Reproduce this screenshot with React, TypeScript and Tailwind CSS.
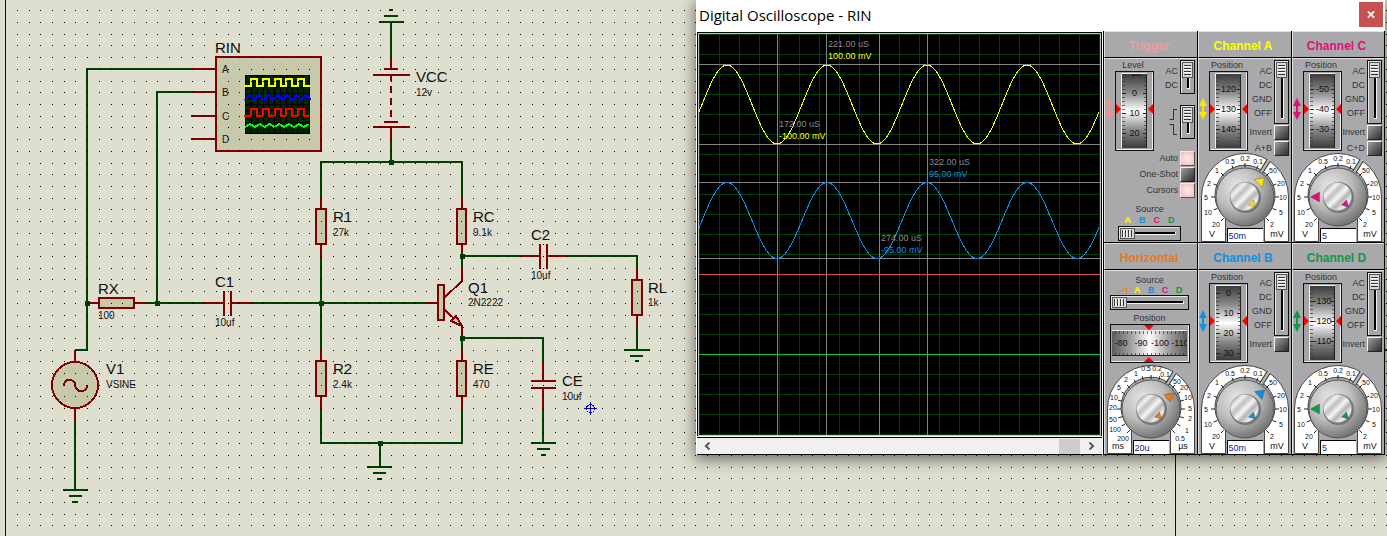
import React from "react";

const SANS = "font-['Liberation_Sans',Arial,sans-serif]";

const WIRE = "#004000";
const PIN = "#800000";
const BODY = "#c8c8aa";

/* ---------- Schematic ---------- */

function gridDots(width: number, height: number) {
  let d = "";
  for (let j = 0; 10.9 + 11.7 * j < height; j++) {
    const y = Math.floor(10.9 + 11.7 * j);
    for (let i = 0; 17.4 + 11.7 * i < width; i++) {
      d += `M${Math.floor(17.4 + 11.7 * i)} ${y}h1v1h-1z`;
    }
  }
  return d;
}

const DOTS = gridDots(2600, 1500);

const WIRES = [
  "M192 69H87V350H75",
  "M192 92H157V303",
  "M146 303H204M252 303H426",
  "M391 22V57M391 139V162",
  "M321 198V162H462V198",
  "M321 257V350M321 409V443H462V409",
  "M462 256V268M462 256H519M567 256H637V267",
  "M637 327V350M462 338V350M462 338H543V361",
  "M543 409V443M380 443V467M75 421V490",
  "M389 10H393M384 16H398M379 22H404",
  "M367 467H392M373 473H386M377 479H382",
  "M624 350H650M630 356H643M635 361H639",
  "M531 443H556M537 449H550M541 455H546",
  "M63 490H88M69 496H82M72 502H78",
].join("");

const PINS = [
  "M192 69H216M192 92H216M191 116H216M191 139H216",
  "M87 303H99M134 303H146M204 303H224M231 303H252",
  "M224 291V316M231 291V316",
  "M391 57V69M384 69H398M373 75H410M391 75V81M391 86V93M391 98V105M391 110V117M384 122H398M373 127H410M391 127V139",
  "M321 198V209M321 244V257M462 198V209M462 244V256",
  "M321 350V361M321 396V409M462 350V361M462 396V409",
  "M519 256H540M547 256H567M540 244V269M547 244V269",
  "M637 267V280M637 315V327",
  "M543 361V381M543 388V409M531 381H556M531 388H556",
  "M426 303H438M462 268V281L445 297M445 310L462 326V338",
  "M75 350V362M75 408V421",
].join("");

const NODES = [
  [87, 303],
  [157, 303],
  [321, 303],
  [391, 162],
  [462, 256],
  [462, 338],
  [380, 443],
];

const LABELS: [number, number, string, number, string][] = [
  [215, 53, "RIN", 0, ""],
  [416, 82, "VCC", 96, "12v"],
  [333, 222, "R1", 236, "27k"],
  [473, 222, "RC", 236, "9.1k"],
  [531, 240, "C2", 279, "10uf"],
  [98, 294, "RX", 319, "100"],
  [215, 287, "C1", 326, "10uf"],
  [106, 374, "V1", 388, "VSINE"],
  [333, 374, "R2", 388, "2.4k"],
  [473, 374, "RE", 388, "470"],
  [468, 293, "Q1", 306, "2N2222"],
  [648, 293, "RL", 306, "1k"],
  [562, 386, "CE", 400, "10uf"],
];

function square(y0: number, y1: number) {
  let d = `M244 ${y1}H251`;
  for (let i = 0; i < 5; i++) {
    const x = Math.round(251 + i * 11.8);
    const next = i < 4 ? Math.round(251 + (i + 1) * 11.8) : 310;
    d += `V${y0}H${x + 6}V${y1}H${next}`;
  }
  return d;
}

function zigzag(y0: number, y1: number, step: number) {
  let d = `M245 ${y1}`;
  let up = true;
  for (let x = 245 + step; x <= 311; x += step) {
    d += `L${x} ${up ? y0 : y1}`;
    up = !up;
  }
  return d;
}

function Schematic() {
  return (
    <svg
      className="absolute inset-0 h-full w-full"
      role="img"
      aria-label="Common emitter amplifier schematic"
    >
      <defs>
        <linearGradient id="drumV" x1="0" y1="0" x2="0" y2="1">
          <stop offset="0" stopColor="#3c3c3c" />
          <stop offset="0.25" stopColor="#8a8a8a" />
          <stop offset="0.5" stopColor="#ffffff" />
          <stop offset="0.75" stopColor="#8a8a8a" />
          <stop offset="1" stopColor="#3c3c3c" />
        </linearGradient>
        <linearGradient id="drumH">
          <stop offset="0" stopColor="#5c5c5c" />
          <stop offset="0.25" stopColor="#a0a0a0" />
          <stop offset="0.5" stopColor="#ffffff" />
          <stop offset="0.75" stopColor="#a0a0a0" />
          <stop offset="1" stopColor="#5c5c5c" />
        </linearGradient>
        <radialGradient id="knob" cx="0.36" cy="0.32" r="0.74">
          <stop offset="0" stopColor="#e6e6e6" />
          <stop offset="0.5" stopColor="#bdbdbd" />
          <stop offset="1" stopColor="#6c6c6c" />
        </radialGradient>
        <linearGradient id="cap" x1="0" y1="0" x2="1" y2="1">
          <stop offset="0.1" stopColor="#9c9c9c" />
          <stop offset="0.26" stopColor="#f2f2f2" />
          <stop offset="0.38" stopColor="#c0c0c0" />
          <stop offset="0.52" stopColor="#f6f6f6" />
          <stop offset="0.64" stopColor="#b4b4b4" />
          <stop offset="0.78" stopColor="#ececec" />
          <stop offset="0.95" stopColor="#a0a0a0" />
        </linearGradient>
      </defs>
      <path d="M5 0h1v1500h-1zM1175 440h1v1060h-1z" fill="#0000a0" />
      <path d="M1380 350H1500" stroke={WIRE} strokeWidth="2" />
      <g shapeRendering="crispEdges" fill="none" strokeWidth="2">
        <rect x="216" y="57" width="105" height="94" fill={BODY} stroke={PIN} />
        <path d={WIRES} stroke={WIRE} />
        <path d={PINS} stroke={PIN} />
        <g fill={BODY} stroke={PIN}>
          <rect x="99" y="298" width="35" height="10" />
          <rect x="316" y="209" width="10" height="35" />
          <rect x="457" y="209" width="9" height="35" />
          <rect x="316" y="361" width="10" height="35" />
          <rect x="457" y="361" width="9" height="35" />
          <rect x="632" y="280" width="10" height="35" />
          <rect x="438" y="285" width="6" height="35" />
          <path d="M451 321L456 316L462 326Z" />
          <circle cx="75" cy="385" r="23" />
          <path d="M64 386V384Q65 380 69 380Q75 380 75 385Q76 391 81 391Q87 391 87 385" fill="none" />
        </g>
      </g>
      <g shapeRendering="crispEdges">
        <rect x="245" y="75" width="65" height="59" fill="#002400" />
        <path
          d="M245.500 75v59M251.500 75v59M257.500 75v59M263.500 75v59M268.500 75v59M274.500 75v59M280.500 75v59M286.500 75v59M292.500 75v59M297.500 75v59M303.500 75v59M309.500 75v59M245 75.500h65M245 81.500h65M245 87.500h65M245 93.500h65M245 98.500h65M245 104.500h65M245 110.500h65M245 116.500h65M245 122.500h65M245 127.500h65M245 133.500h65"
          stroke="#000"
          fill="none"
        />
        <g fill="none" strokeWidth="2">
          <path d={square(79, 86)} stroke="#ffff00" />
          <path d={zigzag(95, 100, 4.7)} stroke="#0000ff" />
          <path d={square(109, 116)} stroke="#ff0000" />
          <path d={zigzag(124, 127, 4.9)} stroke="#00ff00" />
        </g>
      </g>
      {NODES.map(([x, y]) => (
        <rect key={`${x}-${y}`} x={x - 2} y={y - 2} width="5" height="5" fill={WIRE} />
      ))}
      <g stroke="#0000c8" fill="none" shapeRendering="crispEdges">
        <circle cx="590.5" cy="408.5" r="4" />
        <path d="M584 408.500h13M590.500 402v13" />
      </g>
      <g className={SANS} fill="#111">
        {LABELS.map(([x, y, name, vy, value]) => (
          <g key={name}>
            <text x={x} y={y} fontSize="15">{name}</text>
            {value && <text x={x} y={vy} fontSize="10">{value}</text>}
          </g>
        ))}
        <g fontSize="10">
          <text x="222" y="73">A</text>
          <text x="222" y="96">B</text>
          <text x="222" y="120">C</text>
          <text x="222" y="143">D</text>
        </g>
      </g>
      <path d={DOTS} fill="#000" shapeRendering="crispEdges" />
    </svg>
  );
}

/* ---------- Scope screen ---------- */

function sine(center: number, amp: number) {
  let d = "";
  for (let x = 0; x <= 401; x += 2) {
    const y = center - amp * Math.cos(((x - 28) / 100) * 2 * Math.PI);
    d += `${x === 0 ? "M" : "L"}${x} ${y.toFixed(2)}`;
  }
  return d;
}

function scopeGrid() {
  let d = "";
  for (let k = 0; k <= 20; k++) {
    d += `M${k * 20} 0h1v401h-1zM0 ${k * 20}h401v1h-401z`;
  }
  return d;
}

const READOUTS = [
  { x: 129, y: 13, time: "221.00 uS", volts: "100.00 mV", color: "#ffff00" },
  { x: 80, y: 93, time: "172.00 uS", volts: "-100.00 mV", color: "#ffff00" },
  { x: 230, y: 131, time: "322.00 uS", volts: "95.00 mV", color: "#0f90e8" },
  { x: 182, y: 207, time: "274.00 uS", volts: "-95.00 mV", color: "#0f90e8" },
];

function ScopeScreen() {
  return (
    <div className="border border-black border-b-0">
      <div className="border border-[#c0c0c0] bg-black">
        <svg viewBox="0 0 401 401" className="block w-full" role="img" aria-label="Waveforms">
          <g shapeRendering="crispEdges">
            <path d={scopeGrid()} fill="#004000" />
            <path
              d="M0 30h401v1h-401zM0 110h401v1h-401zM0 148h401v1h-401zM0 224h401v1h-401zM78 0h1v401h-1zM127 0h1v401h-1zM180 0h1v401h-1zM228 0h1v401h-1z"
              fill="#868686"
            />
            <path d="M0 240h401v1h-401z" fill="#dc4664" />
            <path d="M0 320h401v1h-401z" fill="#00c83c" />
            <path d={sine(70.5, 39.5)} stroke="#ffff00" fill="none" />
            <path d={sine(186.5, 38)} stroke="#0f90e8" fill="none" />
          </g>
          <g className={SANS} fontSize="9">
            {READOUTS.map((r) => (
              <g key={r.time}>
                <text x={r.x} y={r.y} fill="#8c8c8c">{r.time}</text>
                <text x={r.x} y={r.y + 12} fill={r.color}>{r.volts}</text>
              </g>
            ))}
          </g>
        </svg>
      </div>
    </div>
  );
}

function ScrollBar() {
  return (
    <div className="mt-px flex h-[18px] items-stretch border-y border-black bg-[#f0f0f0]">
      <button aria-label="Scroll left" className="flex w-5 items-center justify-center">
        <svg width="7" height="8" viewBox="0 0 7 8">
          <path d="M5.500 0.500L1.800 4L5.500 7.500" stroke="#505050" strokeWidth="1.800" fill="none" />
        </svg>
      </button>
      <div className="flex grow justify-end pt-px">
        <div className="w-[21px] bg-[#cdcdcd]" />
      </div>
      <button aria-label="Scroll right" className="flex w-[22px] items-center justify-center">
        <svg width="7" height="8" viewBox="0 0 7 8">
          <path d="M1.500 0.500L5.200 4L1.500 7.500" stroke="#505050" strokeWidth="1.800" fill="none" />
        </svg>
      </button>
    </div>
  );
}

/* ---------- Instrument controls ---------- */

function Range({ label }: { label: string }) {
  return (
    <input
      type="range"
      aria-label={label}
      className="absolute inset-0 h-full w-full cursor-pointer opacity-0"
    />
  );
}

function VSwitch({ label, height }: { label: string; height: number }) {
  return (
    <div className="relative shrink-0">
      <svg width="15" height={height} className="block" shapeRendering="crispEdges">
        <rect x="0.5" y="0.5" width="14" height={height - 1} fill="#a6a6a6" stroke="#111" />
        <path d={`M1.500 ${height - 1.5}V1.500H13.500`} fill="none" stroke="#e8e8e8" />
        <path d={`M9.500 17V${height - 5.5}H7`} fill="none" stroke="#f4f4f4" />
        <rect x="7" y="17" width="2" height={height - 23} fill="#000" />
        <rect x="2.5" y="2.5" width="10" height="15" fill="#d8d8d8" stroke="#555" />
        <path d="M4 5.500h7M4 8.500h7M4 11.500h7M4 14.500h7" stroke="#333" />
        <path d="M4 6.500h7M4 9.500h7M4 12.500h7" stroke="#fff" />
      </svg>
      <Range label={label} />
    </div>
  );
}

function HSwitch({ label, width }: { label: string; width: number }) {
  return (
    <div className="relative shrink-0">
      <svg width={width} height="15" className="block" shapeRendering="crispEdges">
        <rect x="0.5" y="0.5" width={width - 1} height="14" fill="#a6a6a6" stroke="#111" />
        <path d={`M1.500 13V1.500H${width - 2}`} fill="none" stroke="#e8e8e8" />
        <path d={`M16 8.500H${width - 5.5}V6`} fill="none" stroke="#f4f4f4" />
        <rect x="16" y="6" width={width - 22} height="2" fill="#000" />
        <rect x="2.5" y="2.5" width="14" height="10" fill="#d8d8d8" stroke="#555" />
        <path d="M4.500 4v7M7.500 4v7M10.500 4v7M13.500 4v7" stroke="#333" />
        <path d="M5.500 4v7M8.500 4v7M11.500 4v7" stroke="#fff" />
      </svg>
      <Range label={label} />
    </div>
  );
}

type Mark = [number, string];

function VWheel({ label, marks, phase }: { label: string; marks: Mark[]; phase: number }) {
  let minor = "";
  for (let y = (phase % 4) + 0.5; y < 75; y += 4) minor += `M0 ${y}h3M22 ${y}h3`;
  return (
    <div className="relative">
      <svg width="39" height="80" className="block">
        <rect x="0.5" y="0.5" width="38" height="79" fill="#a4a4a4" stroke="#111" />
        <path d="M1.500 78.500H37.500V1.500" stroke="#eee" fill="none" />
        <path d="M6.500 77V2.500H32" stroke="#f0f0f0" fill="none" />
        <svg x="7" y="3" width="25" height="74" overflow="hidden">
          <rect width="25" height="74" fill="url(#drumV)" />
          <path d={minor} stroke="#333" strokeOpacity="0.7" />
          <g className={SANS} fontSize="9" textAnchor="middle" fill="#111">
            {marks.map(([y, t]) => (
              <g key={t}>
                <path d={`M0 ${y - 2.5}h4M21 ${y - 2.5}h4`} stroke="#222" />
                <text x="12.5" y={y}>{t}</text>
              </g>
            ))}
          </g>
          <path d="M24.500 0V74" stroke="#222" />
        </svg>
        <path d="M1 33L6 38L1 43ZM38 33L33 38L38 43Z" fill="#ff0000" />
      </svg>
      <Range label={label} />
    </div>
  );
}

function HWheel({ label }: { label: string }) {
  let minor = "";
  for (let x = 3.5; x < 76; x += 4) minor += `M${x} 0v3M${x} 22v3`;
  return (
    <div className="relative">
      <svg width="80" height="39" className="block">
        <rect x="0.5" y="0.5" width="79" height="38" fill="#a4a4a4" stroke="#111" />
        <path d="M1.500 37.500H78.500V1.500" stroke="#eee" fill="none" />
        <path d="M2 6.500H77" stroke="#f0f0f0" fill="none" />
        <svg x="2" y="7" width="75" height="25" overflow="hidden">
          <rect width="75" height="25" fill="url(#drumH)" />
          <path d={minor} stroke="#333" strokeOpacity="0.7" />
          <g className={SANS} fontSize="9" textAnchor="middle" fill="#111">
            <text x="9" y="15">-80</text>
            <text x="29" y="15">-90</text>
            <text x="48" y="15">-100</text>
            <text x="68" y="15">-110</text>
          </g>
          <path d="M0 24.500H75" stroke="#222" />
        </svg>
        <path d="M34 1L44 1L39 6ZM34 38L44 38L39 33Z" fill="#ff0000" />
      </svg>
      <Range label={label} />
    </div>
  );
}

type DialText = [number, number, string];

const VOLT_TEXT: DialText[] = [
  [30, 12, "0.5"],
  [45, 9, "0.2"],
  [58, 12, "0.1"],
  [73, 21, "50"],
  [81, 34, "20"],
  [83, 48, "10"],
  [81, 63, "5"],
  [72, 75, "2"],
  [16, 75, "20"],
  [8, 63, "10"],
  [6, 48, "5"],
  [9, 34, "2"],
  [17, 21, "1"],
];

const TIME_TEXT: DialText[] = [
  [40, 7, "0.5"],
  [51, 7, "0.2"],
  [59, 13, "0.1"],
  [71, 20, "50"],
  [78, 26, "20"],
  [82, 36, "10"],
  [84, 47, "5"],
  [84, 57, "2"],
  [81, 69, "1"],
  [74, 77, "0.5"],
  [17, 77, "200"],
  [9, 68, "100"],
  [7, 58, "50"],
  [7, 46, "20"],
  [8, 36, "10"],
  [13, 26, "5"],
  [20, 18, "2"],
  [30, 12, "1"],
];

function Dial({
  label,
  texts,
  step,
  units,
  color,
  pointer,
  value,
}: {
  label: string;
  texts: DialText[];
  step: number;
  units: [string, string];
  color: string;
  pointer: string;
  value: string;
}) {
  let ticks = "";
  for (let a = -45; a <= 225; a += step) {
    const r = (a * Math.PI) / 180;
    const c = Math.cos(r);
    const s = Math.sin(r);
    ticks += `M${(45 + 30 * c).toFixed(1)} ${(45 - 30 * s).toFixed(1)}L${(45 + 34 * c).toFixed(1)} ${(45 - 34 * s).toFixed(1)}`;
  }
  return (
    <div className="relative mx-auto h-[90px] w-[90px] shrink-0">
      <svg width="90" height="90" className="block">
        <path d="M1.500 89.500V45A43.500 43.500 0 0 1 88.500 45V89.500H64.500V66A30 30 0 1 0 25.500 66V89.500Z" fill="#fff" stroke="#444" />
        <path d="M61 20.500L68.500 8.500" stroke="#333" strokeWidth="4.500" />
        <path d="M61 20.500L69.500 7" stroke="#b4b4b4" strokeWidth="2.500" />
        <path d={ticks} stroke="#222" />
        <g className={SANS} fontSize="7" textAnchor="middle" fill="#111">
          {texts.map(([x, y, t], i) => (
            <text key={i} x={x} y={y}>{t}</text>
          ))}
          <text x="12" y="85" fontSize="9">{units[0]}</text>
          <text x="77" y="85" fontSize="9">{units[1]}</text>
        </g>
        <circle cx="45" cy="45" r="29" fill="url(#knob)" stroke="#555" />
        <circle cx="45.500" cy="45.500" r="15.500" fill="#777" />
        <circle cx="44.500" cy="44.500" r="14" fill="url(#cap)" />
        <path d={pointer} fill={color} stroke="#333" strokeWidth="0.300" />
        <path d="M48.500 53L53.500 48L55.500 55Z" fill={color} stroke="#333" strokeWidth="0.300" />
      </svg>
      <Range label={label} />
      <input
        aria-label={`${label} value`}
        defaultValue={value}
        className="absolute bottom-0 left-[27px] h-[14px] w-[36px] border-l border-t border-black bg-white pl-px text-[9px] leading-[12px] text-[#20208c] outline-none"
      />
    </div>
  );
}

function Led({ label, lit = false }: { label: string; lit?: boolean }) {
  return (
    <label className="flex h-[15px] items-center justify-end gap-[2px] whitespace-nowrap">
      {label}
      <button
        aria-label={label}
        className={
          lit
            ? "h-[15px] w-[15px] border border-[#555] border-t-[#eee] border-l-[#eee] bg-radial from-[#fff0f0] to-[#f4b4b4]"
            : "h-[15px] w-[15px] border border-[#222] border-t-[#eee] border-l-[#eee] bg-linear-to-br from-[#a0a0a0] to-[#303030]"
        }
      />
    </label>
  );
}

function UpDown({ color }: { color: string }) {
  return (
    <svg width="11" height="80" className="mt-[13px] block shrink-0">
      <path d="M5 27L9 35H6V41H9L5 49L1 41H4V35H1Z" fill={color} />
    </svg>
  );
}

function Panel({
  title,
  titleClass,
  children,
}: {
  title: string;
  titleClass: string;
  children: React.ReactNode;
}) {
  return (
    <section className="flex h-[212px] flex-col border-b border-r border-black bg-[#a9a9ab]">
      <h2
        className={`flex h-[27px] shrink-0 items-center justify-center whitespace-nowrap border-b border-l border-t border-b-black border-l-[#e0e0e0] border-t-[#e0e0e0] pr-1 pt-[3px] text-[12px] font-bold leading-[14px] ${titleClass}`}
      >
        {title}
      </h2>
      <div className="flex grow flex-col text-[9px] leading-[13px] text-[#333] shadow-[inset_1px_1px_0_#e0e0e0]">
        {children}
      </div>
    </section>
  );
}

const POINT_MV = "M54.500 27.500L64.500 26L62 35.500Z";
const POINT_5V = "M17.500 45L26.500 40V50Z";

function Channel({
  name,
  titleClass,
  color,
  marks,
  pointer,
  value,
  sum,
}: {
  name: string;
  titleClass: string;
  color: string;
  marks: Mark[];
  pointer: string;
  value: string;
  sum?: string;
}) {
  return (
    <Panel title={`Channel ${name}`} titleClass={titleClass}>
      <div className="flex h-[94px]">
        <UpDown color={color} />
        <div className="w-[39px] shrink-0 text-center">
          <div className="pr-[3px] pt-px leading-[12px]">Position</div>
          <VWheel label={`Channel ${name} position`} marks={marks} phase={marks[0][0] + 1} />
        </div>
        <div className="mr-[2px] flex grow flex-col gap-px pt-[2px]">
          <div className="flex justify-end gap-[2px]">
            <div className="pt-1 text-right leading-[14px]">
              <div>AC</div>
              <div>DC</div>
              <div>GND</div>
              <div>OFF</div>
            </div>
            <VSwitch label={`Channel ${name} coupling`} height={64} />
          </div>
          <Led label="Invert" />
          {sum && <Led label={sum} />}
        </div>
      </div>
      <Dial
        label={`Channel ${name} gain`}
        texts={VOLT_TEXT}
        step={22.5}
        units={["V", "mV"]}
        color={color}
        pointer={pointer}
        value={value}
      />
    </Panel>
  );
}

function SourceLetters() {
  return (
    <>
      <span className="text-[#ffff00]">A</span>
      <span className="text-[#0f90e0]">B</span>
      <span className="text-[#e0107c]">C</span>
      <span className="text-[#109848]">D</span>
    </>
  );
}

function Trigger() {
  return (
    <Panel title="Trigger" titleClass="text-[#f09c9c]">
      <div className="flex h-[93px]">
        <UpDown color="#f09090" />
        <div className="w-[39px] shrink-0 text-center">
          <div className="pr-[3px] pt-px leading-[12px]">Level</div>
          <VWheel
            label="Trigger level"
            marks={[[2, "-10"], [22, "0"], [42, "10"], [62, "20"]]}
            phase={3}
          />
        </div>
        <div className="mr-[2px] flex grow flex-col gap-[11px] pt-[2px]">
          <div className="flex justify-end gap-[2px]">
            <div className="pt-1 text-right leading-[14px]">
              <div>AC</div>
              <div>DC</div>
            </div>
            <VSwitch label="Trigger coupling" height={34} />
          </div>
          <div className="flex justify-end gap-[3px]">
            <svg width="8" height="32" className="block" fill="none" stroke="#333">
              <path d="M0.500 14.500H4.500V4.500H8M0.500 19.500H4.500V29.500H8" />
            </svg>
            <VSwitch label="Trigger edge" height={34} />
          </div>
        </div>
      </div>
      <div className="mr-[2px] flex flex-col gap-px">
        <Led label="Auto" lit />
        <Led label="One-Shot" />
        <Led label="Cursors" lit />
      </div>
      <div className="mr-[2px] mt-auto flex flex-col items-center pb-px leading-[11px]">
        <div>Source</div>
        <div className="flex w-[58px] justify-around font-bold">
          <SourceLetters />
        </div>
        <div>
          <HSwitch label="Trigger source" width={63} />
        </div>
      </div>
    </Panel>
  );
}

function Horizontal() {
  return (
    <Panel title="Horizontal" titleClass="text-[#e87818]">
      <div className="mr-[2px] flex h-[94px] flex-col items-center pt-[5px] leading-[10px]">
        <div>Source</div>
        <div className="flex w-[73px] items-center justify-around font-bold">
          <svg width="10" height="7" fill="none" stroke="#e87818">
            <path d="M0 6.500L9.500 1V7" />
          </svg>
          <SourceLetters />
        </div>
        <div>
          <HSwitch label="Horizontal source" width={79} />
        </div>
        <div className="pb-px pt-[3px]">Position</div>
        <HWheel label="Horizontal position" />
      </div>
      <Dial
        label="Timebase"
        texts={TIME_TEXT}
        step={15}
        units={["ms", "µs"]}
        color="#e87818"
        pointer="M58 30.500L68.500 29L64 38Z"
        value="20u"
      />
    </Panel>
  );
}

export default function App() {
  return (
    <main className={`relative min-h-screen w-full overflow-hidden bg-[#dfdfcf] ${SANS}`}>
      <Schematic />
      <section
        aria-label="Digital Oscilloscope"
        className="absolute right-[2px] top-0 bg-white shadow-[0_3px_14px_1px_rgba(0,0,0,0.55)]"
      >
        <header className="flex h-[31px] items-start justify-between pl-[3px] pr-[2px]">
          <h1 className="font-['Open_Sans','Noto_Sans',sans-serif] text-[15px] leading-[31px] text-black">
            Digital Oscilloscope - RIN
          </h1>
          <button
            aria-label="Close"
            className="mt-[2px] flex h-[25px] w-6 items-center justify-center bg-[#c75050]"
          >
            <svg width="8" height="7" viewBox="0 0 8 7">
              <path d="M0.800 0.300L7.200 6.700M7.200 0.300L0.800 6.700" stroke="#fff" strokeWidth="1.700" />
            </svg>
          </button>
        </header>
        <div className="flex">
          <div className="ml-px mr-px mt-px w-[405px]">
            <ScopeScreen />
            <ScrollBar />
          </div>
          <div className="grid grid-cols-[94px_94px_93px] border-l border-black">
            <Trigger />
            <Channel
              name="A"
              titleClass="text-[#ffff00]"
              color="#f8e800"
              marks={[[18, "120"], [38, "130"], [58, "140"]]}
              pointer={POINT_MV}
              value="50m"
              sum="A+B"
            />
            <Channel
              name="C"
              titleClass="text-[#e0107c]"
              color="#e0107c"
              marks={[[18, "-50"], [38, "-40"], [58, "-30"]]}
              pointer={POINT_5V}
              value="5"
              sum="C+D"
            />
            <Horizontal />
            <Channel
              name="B"
              titleClass="text-[#0f90e0]"
              color="#0f90e0"
              marks={[[10, "0"], [30, "10"], [50, "20"], [70, "30"]]}
              pointer={POINT_MV}
              value="50m"
            />
            <Channel
              name="D"
              titleClass="text-[#109848]"
              color="#109848"
              marks={[[18, "-130"], [38, "-120"], [58, "-110"]]}
              pointer={POINT_5V}
              value="5"
            />
          </div>
        </div>
      </section>
    </main>
  );
}
